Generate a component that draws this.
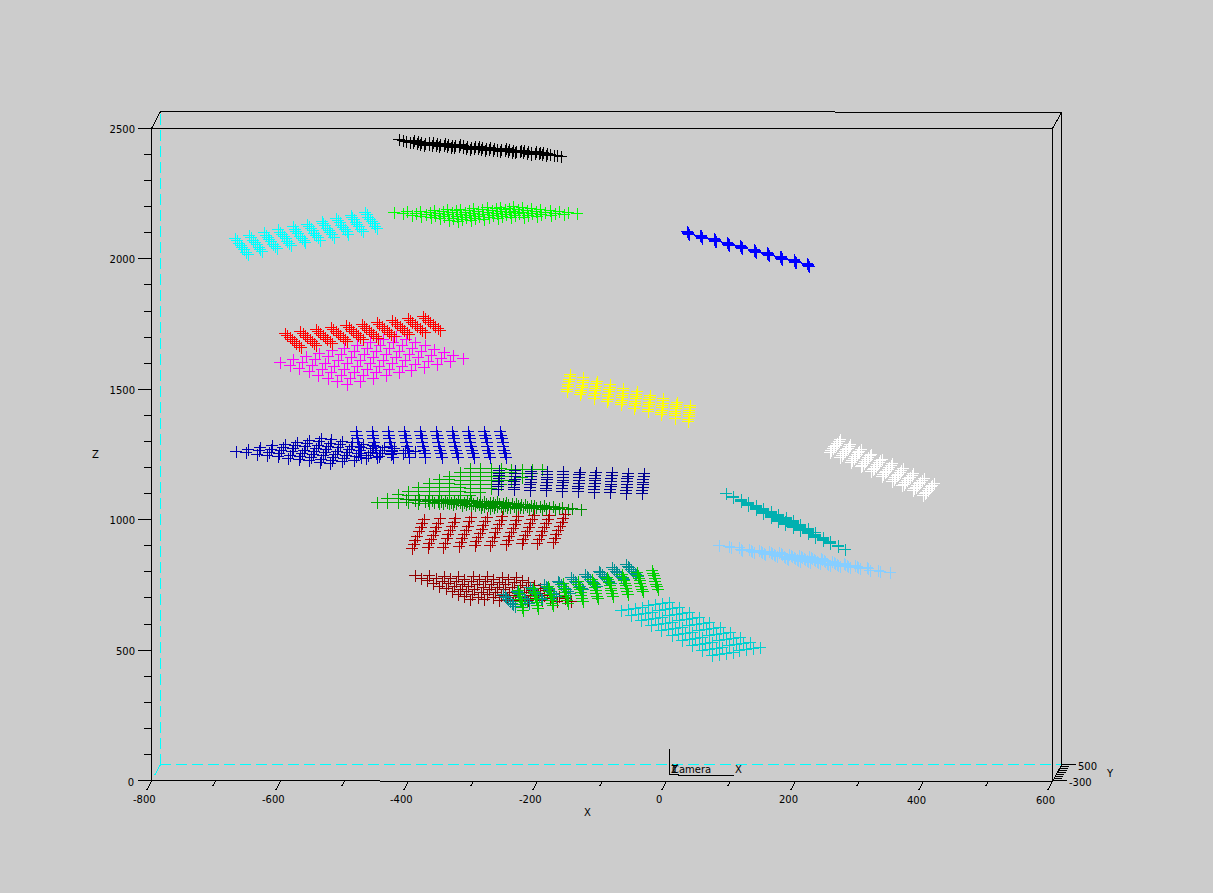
import React from "react";

type Point = [number, number];

interface Grid {
  color: string;
  // start, end of the first row, end of the first column, opposite corner
  corners: [Point, Point, Point, Point];
}

const ACROSS = 10;
const DOWN = 8;

const grids: Grid[] = [
  { color: "#000000", corners: [[399, 139], [536, 151], [424, 145], [561, 156]] },
  { color: "#00ffff", corners: [[235, 238], [365, 212], [248, 254], [377, 228]] },
  { color: "#00ff00", corners: [[394, 212], [513, 206], [458, 221], [577, 213]] },
  { color: "#0000ff", corners: [[687, 231], [807, 263], [689, 234], [809, 266]] },
  { color: "#ff00ff", corners: [[280, 362], [396, 336], [347, 384], [463, 358]] },
  { color: "#ff0000", corners: [[285, 333], [423, 316], [301, 347], [440, 330]] },
  { color: "#ffff00", corners: [[570, 374], [690, 405], [567, 391], [688, 421]] },
  { color: "#ffffff", corners: [[840, 439], [934, 483], [830, 452], [923, 495]] },
  { color: "#0000b0", corners: [[236, 451], [330, 463], [321, 438], [415, 451]] },
  { color: "#0000d0", corners: [[356, 431], [500, 431], [361, 457], [506, 457]] },
  { color: "#00b000", corners: [[377, 502], [470, 468], [449.33, 503], [542.33, 469]] },
  { color: "#000090", corners: [[499, 470], [644, 473], [498, 489], [642, 493]] },
  { color: "#009000", corners: [[406, 499], [490, 508], [497, 501], [581, 509]] },
  { color: "#b00000", corners: [[424, 519], [565, 514], [412, 548], [553, 542]] },
  { color: "#00b0b0", corners: [[726, 493], [793, 520], [778, 521], [845, 549]] },
  { color: "#87ceff", corners: [[719, 545], [809, 556], [800, 561], [890, 572]] },
  { color: "#900000", corners: [[415, 575], [470, 599], [516, 577], [571, 601]] },
  { color: "#009090", corners: [[503, 594], [626, 564], [515, 606], [638, 576]] },
  { color: "#00d000", corners: [[518, 590], [652, 570], [523, 610], [658, 589]] },
  { color: "#00d0d0", corners: [[621, 610], [712, 655], [669, 602], [760, 647]] },
];

function gridPath({ corners: [a, b, c, d] }: Grid): string {
  const parts: string[] = [];
  for (let j = 0; j < DOWN; j++) {
    for (let i = 0; i < ACROSS; i++) {
      const u = i / (ACROSS - 1);
      const v = j / (DOWN - 1);
      const at = (k: 0 | 1) =>
        Math.round((1 - v) * ((1 - u) * a[k] + u * b[k]) + v * ((1 - u) * c[k] + u * d[k]));
      const x = at(0);
      const y = at(1);
      parts.push(`M${x - 6} ${y}h12v1h-12zM${x} ${y - 5}h1v12h-1z`);
    }
  }
  return parts.join("");
}

const zTicks = Array.from({ length: 26 }, (_, i) => ({
  y: Math.round(780 - i * 26.08) + 0.5,
  major: i % 5 === 0,
}));

const xTicks = Array.from({ length: 15 }, (_, i) => ({
  x: Math.round(151 + i * 64.36) + 0.5,
  major: i % 2 === 0,
}));

const yTicks = Array.from({ length: 9 }, (_, i) => ({
  x: Math.round(1052 + i * 1.125) + 0.5,
  y: 780.5 - i * 2,
  major: i === 0 || i === 8,
}));

const labels: { text: string; x: number; y: number; end?: boolean }[] = [
  { text: "2500", x: 135, y: 133, end: true },
  { text: "2000", x: 135, y: 263, end: true },
  { text: "1500", x: 135, y: 394, end: true },
  { text: "1000", x: 135, y: 524, end: true },
  { text: "500", x: 135, y: 655, end: true },
  { text: "0", x: 134, y: 786, end: true },
  { text: "-800", x: 133, y: 803 },
  { text: "-600", x: 262, y: 803 },
  { text: "-400", x: 390, y: 803 },
  { text: "-200", x: 519, y: 803 },
  { text: "0", x: 656, y: 803 },
  { text: "200", x: 779, y: 803 },
  { text: "400", x: 907, y: 804 },
  { text: "600", x: 1036, y: 804 },
  { text: "500", x: 1078, y: 770 },
  { text: "-300", x: 1069, y: 786 },
  { text: "X", x: 584, y: 816 },
  { text: "Y", x: 1107, y: 777 },
  { text: "Z", x: 92, y: 458 },
  { text: "Camera", x: 672, y: 773 },
  { text: "Y", x: 672, y: 772 },
  { text: "Z", x: 671, y: 773 },
  { text: "X", x: 735, y: 773 },
];

export default function App() {
  return (
    <main className="min-h-screen bg-[#cccccc]">
      <svg
        viewBox="0 0 1213 893"
        role="img"
        aria-label="3D scatter plot"
        className="block h-auto w-full"
      >
        <g shapeRendering="crispEdges" fill="none" strokeWidth="1">
          <g stroke="#00ffff" strokeDasharray="11 5">
            <path d="M160.500 765V111" />
            <path d="M160 764.500H1061" />
            <path d="M160.500 764.500L151.500 781" strokeDasharray="12 30" />
          </g>
          <g stroke="#000000">
            <path d="M151.500 128V781M151 128.500H1053M1052.500 128V781M151 780.500H380M380 781.500H1053" />
            <path d="M151.500 128.500L160.500 111.500M160 111.500H835M835 112.500H1062M1061.500 112V765M1061.500 112.500L1052.500 128.500M1052.500 781.500L1061.500 765" />
            {zTicks.map((t) => (
              <path key={t.y} d={`M${t.major ? 138 : 144} ${t.y}H152`} />
            ))}
            {xTicks.map((t) => (
              <path key={t.x} d={`M${t.x} 781.500l${t.major ? -5 : -3} ${t.major ? 9 : 5}`} />
            ))}
            {yTicks.map((t) => (
              <path key={t.y} d={`M${t.x} ${t.y}h${t.major ? 14 : 8}`} />
            ))}
            <path d="M669.500 749V775M669 774.500H679M678 775.500H734" />
          </g>
        </g>
        <g shapeRendering="crispEdges">
          {grids.map((g) => (
            <path key={g.color} d={gridPath(g)} fill={g.color} />
          ))}
        </g>
        <g className="fill-black font-['DejaVu_Sans',sans-serif] text-[10px]">
          {labels.map((l, i) => (
            <text key={i} x={l.x} y={l.y} textAnchor={l.end ? "end" : "start"}>
              {l.text}
            </text>
          ))}
        </g>
      </svg>
    </main>
  );
}
